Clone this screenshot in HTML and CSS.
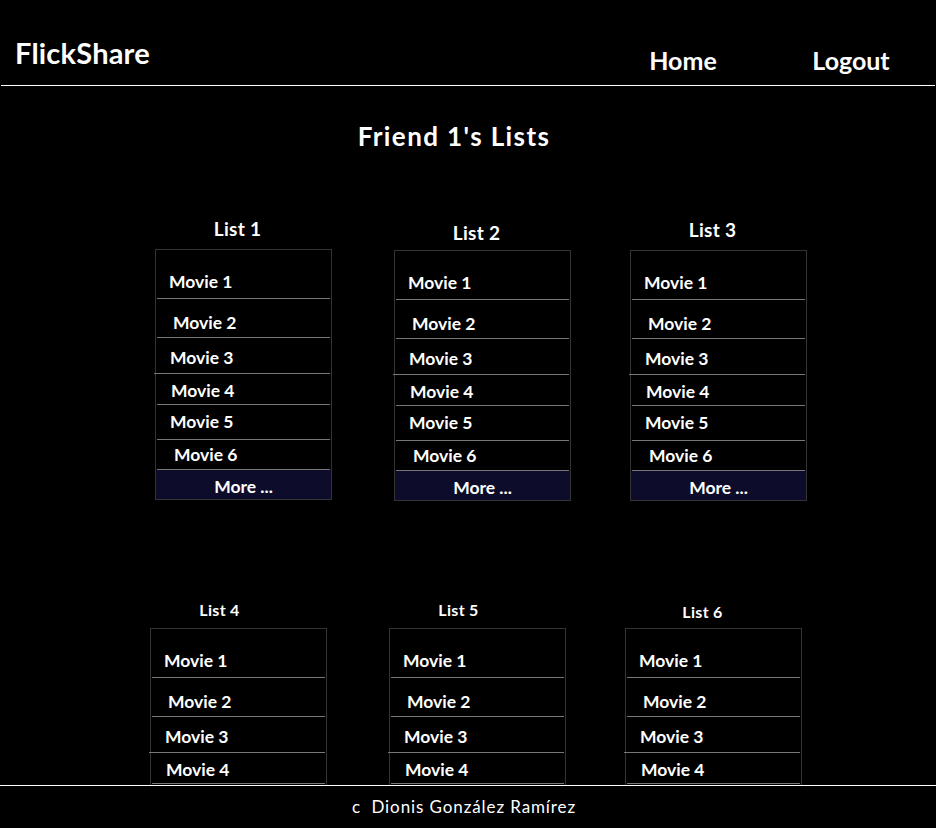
FILE: index.html
```html
<!DOCTYPE html>
<html lang="en">
<head>
<meta charset="utf-8">
<title>FlickShare - Friend 1's Lists</title>
<link rel="stylesheet" href="styles.css">
</head>
<body>
<header class="site-header">
  <div class="brand">FlickShare</div>
  <nav class="nav">
    <a class="nav-link" href="#">Home</a>
    <a class="nav-link" href="#">Logout</a>
  </nav>
</header>

<main class="content">
  <h1 class="page-title">Friend 1's Lists</h1>

  <section class="list-row list-row--first">
    <div class="list-card">
      <h2 class="list-title">List 1</h2>
      <ul class="movie-list">
        <li>Movie 1</li><li>Movie 2</li><li>Movie 3</li><li>Movie 4</li><li>Movie 5</li><li>Movie 6</li>
        <li class="more">More ...</li>
      </ul>
    </div>
    <div class="list-card list-card--low">
      <h2 class="list-title">List 2</h2>
      <ul class="movie-list">
        <li>Movie 1</li><li>Movie 2</li><li>Movie 3</li><li>Movie 4</li><li>Movie 5</li><li>Movie 6</li>
        <li class="more">More ...</li>
      </ul>
    </div>
    <div class="list-card list-card--mid">
      <h2 class="list-title">List 3</h2>
      <ul class="movie-list">
        <li>Movie 1</li><li>Movie 2</li><li>Movie 3</li><li>Movie 4</li><li>Movie 5</li><li>Movie 6</li>
        <li class="more">More ...</li>
      </ul>
    </div>
  </section>

  <section class="list-row list-row--second">
    <div class="list-card">
      <h2 class="list-title">List 4</h2>
      <ul class="movie-list">
        <li>Movie 1</li><li>Movie 2</li><li>Movie 3</li><li>Movie 4</li><li>Movie 5</li><li>Movie 6</li>
        <li class="more">More ...</li>
      </ul>
    </div>
    <div class="list-card">
      <h2 class="list-title">List 5</h2>
      <ul class="movie-list">
        <li>Movie 1</li><li>Movie 2</li><li>Movie 3</li><li>Movie 4</li><li>Movie 5</li><li>Movie 6</li>
        <li class="more">More ...</li>
      </ul>
    </div>
    <div class="list-card list-card--last">
      <h2 class="list-title">List 6</h2>
      <ul class="movie-list">
        <li>Movie 1</li><li>Movie 2</li><li>Movie 3</li><li>Movie 4</li><li>Movie 5</li><li>Movie 6</li>
        <li class="more">More ...</li>
      </ul>
    </div>
  </section>
</main>

<footer class="site-footer">c&nbsp;&nbsp;Dionis González Ramírez</footer>
</body>
</html>
```

FILE: styles.css
```css
* { box-sizing: border-box; }

html, body {
  margin: 0;
  padding: 0;
  background: #000;
  color: #fff;
  font-family: Lato, "Open Sans", "Noto Sans", sans-serif;
}

.site-header {
  display: flex;
  justify-content: space-between;
  align-items: flex-start;
  height: 86px;
  margin: 0 1px;
  border-bottom: 1px solid #fff;
}

.brand {
  font-size: 29px;
  font-weight: 700;
  letter-spacing: 0.2px;
  padding: 35px 0 0 14px;
}

.nav {
  display: flex;
  gap: 68px;
  padding: 45px 34px 0 0;
}

.nav-link {
  display: block;
  width: 100px;
  text-align: center;
  color: #fff;
  text-decoration: none;
  font-size: 25px;
  font-weight: 700;
}

.content {
  padding-bottom: 80px;
}

.page-title {
  margin: 34px 28px 0 0;
  text-align: center;
  font-size: 26px;
  font-weight: 700;
  letter-spacing: 1.4px;
}

.list-row {
  display: grid;
  grid-template-columns: 239px 236px 177px;
}

.list-row--first {
  margin: 65px 0 0 155px;
}

.list-row--second {
  margin: 99px 0 0 150px;
}

.list-card {
  width: 177px;
}

.list-title {
  margin: 0 0 9px;
  padding-right: 12px;
  text-align: center;
  font-size: 19px;
  font-weight: 700;
  letter-spacing: 0.3px;
}

.list-card--low .list-title { margin-top: 4px; margin-bottom: 6px; }
.list-card--mid .list-title { margin-top: 1px; margin-bottom: 9px; }

.list-row--second .list-title {
  font-size: 16px;
  padding-right: 38px;
}

.list-row--second .list-card--last .list-title {
  padding-right: 22px;
  margin-top: 2px;
  margin-bottom: 7px;
}

.movie-list {
  list-style: none;
  margin: 0;
  padding: 0;
  border: 1px solid #333;
}

.movie-list li {
  margin: 0 1px 0 1px;
  border-bottom: 1px solid #777;
  font-size: 17.5px;
  font-weight: 700;
  line-height: 20px;
  white-space: nowrap;
}

.movie-list li:nth-child(1) { height: 49px; padding: 22px 0 0 12px; }
.movie-list li:nth-child(2) { height: 39px; padding: 14px 0 0 16px; }
.movie-list li:nth-child(3) { height: 36px; padding: 10px 0 0 16px; margin-left: -2px; }
.movie-list li:nth-child(4) { height: 31px; padding: 7px 0 0 14px; }
.movie-list li:nth-child(5) { height: 35px; padding: 7px 0 0 13px; }
.movie-list li:nth-child(6) { height: 30px; padding: 5px 0 0 17px; }

.movie-list li.more {
  height: 29px;
  margin: 0;
  padding: 7px 0 0 0;
  border-bottom: none;
  background: #0d0d2b;
  text-align: center;
}

.site-footer {
  position: fixed;
  left: 0;
  right: 0;
  bottom: 0;
  height: 43px;
  padding: 10px 8px 0 0;
  border-top: 1px solid #fff;
  background: #000;
  text-align: center;
  font-size: 17px;
  font-weight: 400;
  letter-spacing: 0.9px;
}
```
